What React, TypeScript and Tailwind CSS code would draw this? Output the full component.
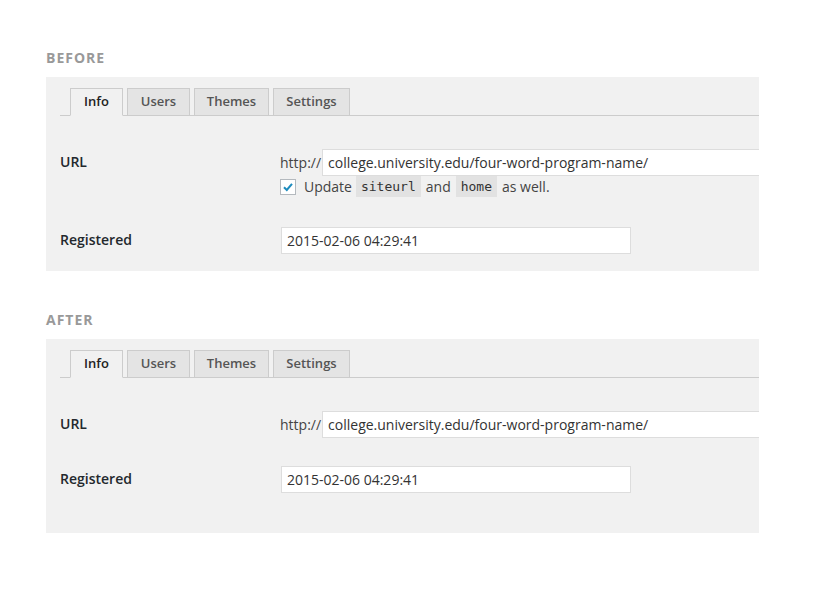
const sans = "[font-family:'Open_Sans',Arial,sans-serif]"

const tabs = [
  { label: "Info", w: "w-[53px]" },
  { label: "Users", w: "w-[63px]" },
  { label: "Themes", w: "w-[75px]" },
  { label: "Settings", w: "w-[77px]" },
]

function Tabs() {
  return (
    <div className="flex items-end h-[28px] border-b border-[#ccc] pl-[10px] gap-[4px]">
      {tabs.map((t, i) =>
        i === 0 ? (
          <div key={t.label} className={`${t.w} h-[28px] -mb-px pb-[2px] text-center border border-[#ccc] border-b-[#f1f1f1] bg-[#f1f1f1] text-[13px] font-semibold leading-[24px] text-[#222]`}>
            {t.label}
          </div>
        ) : (
          <div key={t.label} className={`${t.w} h-[28px] -mb-px pb-[2px] text-center border border-[#ccc] bg-[#e4e4e4] text-[13px] font-semibold leading-[24px] text-[#555]`}>
            {t.label}
          </div>
        )
      )}
    </div>
  )
}

function Code({ children }: { children: string }) {
  return (
    <span className="bg-[#e2e2e2] px-[5px] h-[21px] leading-[21px] text-[13px] text-[#333] [font-family:'DejaVu_Sans_Mono',monospace]">
      {children}
    </span>
  )
}

function Panel({ before }: { before: boolean }) {
  return (
    <div className="h-[194px] w-[713px] bg-[#f1f1f1] pl-[14px] pt-[11px] overflow-hidden">
      <Tabs />
      <div className="flex mt-[33px]">
        <div className="w-[220px] shrink-0 h-[27px] leading-[26px] text-[14px] font-semibold text-[#23282d]">URL</div>
        <div className="flex flex-col">
          <div className="flex items-center gap-[1px]">
            <span className="text-[14px] text-[#444]">http://</span>
            <div className="w-[460px] shrink-0 h-[27px] bg-white border border-[#ddd] pl-[5px] leading-[25px] text-[14px] text-[#333]">
              college.university.edu/four-word-program-name/
            </div>
          </div>
          {before && (
            <div className="flex items-center h-[21px] text-[14px] text-[#444]">
              <span className="w-[16px] h-[16px] bg-white border border-[#b4b9be] flex items-center justify-center shrink-0">
                <svg width="12" height="12" viewBox="0 0 12 12">
                  <path d="M2 6.2 L4.8 9 L10 2.8" fill="none" stroke="#1e8cbe" strokeWidth="2" />
                </svg>
              </span>
              <span className="ml-[8px] mr-[4px]">Update</span>
              <Code>siteurl</Code>
              <span className="mx-[5px]">and</span>
              <Code>home</Code>
              <span className="ml-[5px]">as well.</span>
            </div>
          )}
        </div>
      </div>
      <div className={before ? "flex mt-[30px]" : "flex mt-[28px]"}>
        <div className="w-[220px] shrink-0 h-[27px] leading-[26px] text-[14px] font-semibold text-[#23282d]">Registered</div>
        <div className="ml-[1px] w-[350px] h-[27px] bg-white border border-[#ddd] pl-[5px] leading-[25px] text-[14px] text-[#333]">
          2015-02-06 04:29:41
        </div>
      </div>
    </div>
  )
}

export default function App() {
  return (
    <div className={`w-[816px] h-[594px] bg-white pl-[46px] pt-[48px] ${sans}`}>
      <div className="h-[20px] mb-[9px] text-[14px] leading-[20px] font-bold tracking-[1px] text-[#999]">BEFORE</div>
      <Panel before />
      <div className="h-[20px] mt-[39px] mb-[9px] text-[14px] leading-[20px] font-bold tracking-[1px] text-[#999]">AFTER</div>
      <Panel before={false} />
    </div>
  )
}
